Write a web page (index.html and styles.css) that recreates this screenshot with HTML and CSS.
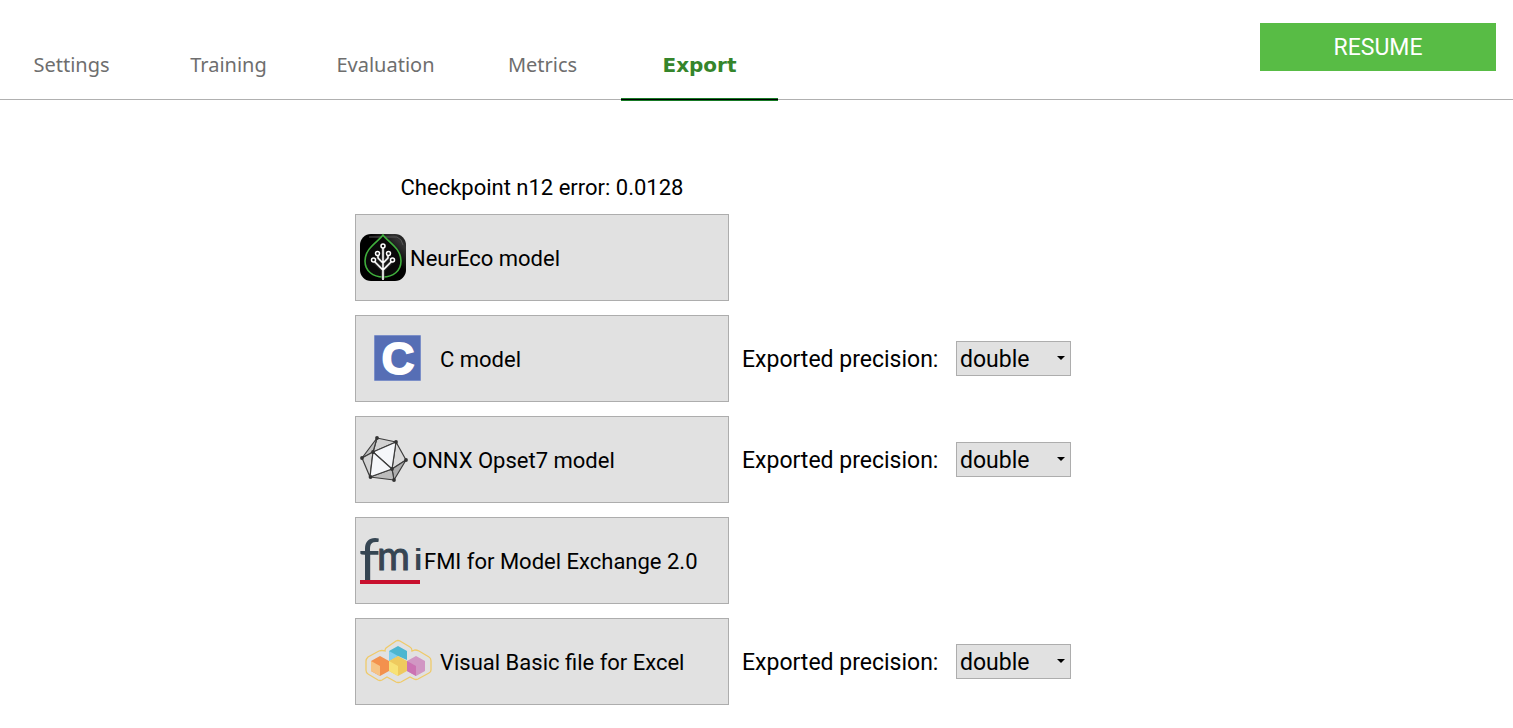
FILE: index.html
```html
<!DOCTYPE html>
<html lang="en">
<head>
<meta charset="utf-8">
<title>Export</title>
<link rel="stylesheet" href="styles.css">
</head>
<body>
<header class="topbar">
  <nav class="tabs">
    <a class="tab" href="#settings">Settings</a>
    <a class="tab" href="#training">Training</a>
    <a class="tab" href="#evaluation">Evaluation</a>
    <a class="tab" href="#metrics">Metrics</a>
    <a class="tab tab-active" href="#export" aria-current="page">Export</a>
  </nav>
  <button class="resume" type="button">RESUME</button>
</header>
<main class="exports">
  <p class="checkpoint">Checkpoint n12 error: 0.0128</p>
  <div class="row">
    <button class="model" type="button">
      <svg class="icon" width="46" height="48" viewBox="0 0 46 48" aria-hidden="true">
        <defs><linearGradient id="gloss" x1="0" y1="1" x2="1" y2="0"><stop offset="0.6" stop-color="#000"/><stop offset="0.85" stop-color="#333"/><stop offset="1" stop-color="#111"/></linearGradient></defs>
        <rect y="1" width="46" height="47" rx="11" fill="url(#gloss)"/>
        <path d="M9 4H37Q42 6 43 12" fill="none" stroke="#555" stroke-width="1"/>
        <path d="M23 2C18 9 5 15 5 28C5 38 13 44 23 44S41 38 41 28C41 15 28 9 23 2Z" fill="#090909" stroke="#3fae3c" stroke-width="1.6"/>
        <path d="M23 15V46M14 28L23 37L32 28M18 22V25L23 30L28 25V22" fill="none" stroke="#444" stroke-width="4" opacity=".6"/>
        <path d="M23 15V47M14 28L23 37L32 28M18 22V25L23 30L28 25V22" fill="none" stroke="#fff" stroke-width="1.6"/>
        <g fill="#111" stroke="#fff" stroke-width="1.5"><circle cx="23" cy="13" r="2"/><circle cx="17.5" cy="20.5" r="2"/><circle cx="28.5" cy="20.5" r="2"/><circle cx="13.5" cy="27" r="2"/><circle cx="32.5" cy="27" r="2"/></g>
      </svg>
      <span class="name">NeurEco model</span>
    </button>
  </div>
  <div class="row">
    <button class="model model-c" type="button">
      <svg class="icon" width="47" height="46" viewBox="0 0 47 46" aria-hidden="true">
        <rect width="47" height="46" rx="1" fill="#7c8fc8"/>
        <rect x="1" y="1" width="45" height="44" fill="#566eb5"/>
        <text class="logo-c" x="24" y="39" text-anchor="middle">C</text>
      </svg>
      <span class="name">C model</span>
    </button>
    <label class="precision" for="precision-c">Exported precision:</label>
    <span class="picker"><select class="select" id="precision-c"><option>double</option><option>float</option></select></span>
  </div>
  <div class="row">
    <button class="model" type="button">
      <svg class="icon" width="48" height="48" viewBox="0 0 48 48" aria-hidden="true">
        <g stroke="#3c3c3c" stroke-width="1.2" stroke-linejoin="round">
          <path d="M17 3L36 7L13 17Z" fill="#d2d2d2"/><path d="M17 3L13 17L2 23Z" fill="#bebebe"/>
          <path d="M2 23L13 17L10 42Z" fill="#d2d2d2"/><path d="M36 7L46 25L32 34Z" fill="#d9d9d9"/>
          <path d="M46 25L34 45L32 34Z" fill="#adadad"/><path d="M10 42L32 34L34 45Z" fill="#bcbcbc"/>
          <path d="M36 7L13 17L32 34Z" fill="#f5f7fa"/><path d="M13 17L32 34L10 42Z" fill="#f5f7fa"/>
        </g>
        <g fill="#333"><circle cx="17" cy="3" r="1.9"/><circle cx="36" cy="7" r="1.9"/><circle cx="13" cy="17" r="1.9"/><circle cx="2" cy="23" r="1.9"/><circle cx="46" cy="25" r="1.9"/><circle cx="32" cy="34" r="1.9"/><circle cx="10.5" cy="42" r="1.9"/><circle cx="34" cy="45" r="1.9"/></g>
      </svg>
      <span class="name">ONNX Opset7 model</span>
    </button>
    <label class="precision" for="precision-onnx">Exported precision:</label>
    <span class="picker"><select class="select" id="precision-onnx"><option>double</option><option>float</option></select></span>
  </div>
  <div class="row">
    <button class="model" type="button">
      <svg class="icon" width="60" height="50" viewBox="0 0 60 50" aria-hidden="true">
        <rect y="45" width="60" height="4" fill="#c8102e"/>
        <text class="logo-f" x="-1" y="45">f</text>
        <text class="logo-m" x="17" y="35">m</text>
        <text class="logo-i" x="54" y="35">i</text>
      </svg>
      <span class="name">FMI for Model Exchange 2.0</span>
    </button>
  </div>
  <div class="row">
    <button class="model model-vb" type="button">
      <svg class="icon" width="67" height="46" viewBox="0 0 67 46" aria-hidden="true">
        <path d="M20 13Q20 11 21 10L31 3Q33 2 35 3L45 9Q47 10 47 13L50 12Q52 12 54 13L64 19Q66 20 66 23V32Q66 34 64 35L53 41Q51 42 49 41L45 39L36 44Q33 45 31 44L22 39L17 42Q15 43 13 42L3 36Q1 35 1 32V23Q1 21 3 19L14 13Q17 12 20 13Z" fill="none" stroke="#efca69" stroke-width="1.3"/>
        <path d="M24 13L33 8L42 13V22L33 18L24 23Z" fill="#4db6d0"/><path d="M24 13L33 18L24 23Z" fill="#81cfef"/>
        <path d="M6 23L15 18L24 23V33L15 38L6 33Z" fill="#f3914d"/><path d="M6 23L15 28V38L6 33Z" fill="#f6c385"/>
        <path d="M42 23L51 18L60 23V33L51 38L42 33Z" fill="#d197c3"/><path d="M42 23L51 28V38L42 33Z" fill="#cc72b2"/>
        <path d="M24 23L33 18L42 23V33L33 38L24 33Z" fill="#efca5e"/><path d="M24 23L33 28V38L24 33Z" fill="#f8e276"/>
      </svg>
      <span class="name">Visual Basic file for Excel</span>
    </button>
    <label class="precision" for="precision-vb">Exported precision:</label>
    <span class="picker"><select class="select" id="precision-vb"><option>double</option><option>float</option></select></span>
  </div>
</main>
</body>
</html>
```
FILE: styles.css
```css
* { box-sizing: border-box; }
body {
  margin: 0;
  background: #fff;
  color: #000;
  font: 22px/26px Roboto, sans-serif;
}
button, select { font: inherit; color: inherit; }
.topbar {
  display: flex;
  justify-content: space-between;
  align-items: flex-start;
  height: 100px;
  padding-right: 17px;
  border-bottom: 1px solid #b0b0b0;
}
.tabs { display: flex; margin-left: -7px; padding-top: 31px; }
.tab {
  width: 157px;
  height: 70px;
  padding-top: 21px;
  text-align: center;
  text-decoration: none;
  color: #6e6e6e;
  font-family: "Noto Sans", sans-serif;
  font-size: 20px;
}
.tab-active {
  color: #35852b;
  font-family: "DejaVu Sans", sans-serif;
  font-weight: bold;
  background: linear-gradient(#177a26 0 1px, #000 1px 2px, #177a26 2px 3px) bottom / 100% 3px no-repeat;
}
.resume {
  width: 236px;
  height: 48px;
  margin-top: 23px;
  padding: 2px 0 0;
  border: 0;
  background: #58bc45;
  color: #fff;
  font-size: 23px;
}
.exports {
  display: flex;
  flex-direction: column;
  gap: 14px;
  padding: 76px 0 23px 355px;
}
.checkpoint { width: 374px; margin: 0; line-height: 24px; text-align: center; }
.row { display: flex; align-items: center; }
.model {
  display: flex;
  align-items: center;
  gap: 4px;
  width: 374px;
  height: 87px;
  padding: 0 4px 2px;
  border: 1px solid #adadad;
  background: #e1e1e1;
  text-align: left;
}
.model-c { gap: 19px; padding-left: 18px; }
.model-vb { gap: 8px; padding-left: 9px; }
.icon { flex: none; overflow: visible; }
.name { padding-top: 4px; white-space: nowrap; }
.precision { width: 214px; margin-left: 13px; padding-top: 2px; font-size: 23px; }
.picker { display: flex; position: relative; }
.picker::after {
  content: "";
  position: absolute;
  top: 15px;
  right: 6px;
  border: 4px solid transparent;
  border-top-color: #000;
  border-bottom: 0;
  pointer-events: none;
}
.select {
  width: 115px;
  height: 35px;
  padding: 2px 3px 0;
  border: 1px solid #adadad;
  border-radius: 0;
  background: #e1e1e1;
  font-size: 23px;
  appearance: none;
}
.logo-c { font: bold 45px "Liberation Sans", sans-serif; fill: #fff; stroke: #fff; stroke-width: 2px; }
.logo-f { font: 58px Lato, sans-serif; fill: #364653; }
.logo-m { font: 40px Lato, sans-serif; fill: #364653; stroke: #364653; stroke-width: 1px; }
.logo-i { font: bold 30px "Liberation Sans", sans-serif; fill: #364653; }
```
